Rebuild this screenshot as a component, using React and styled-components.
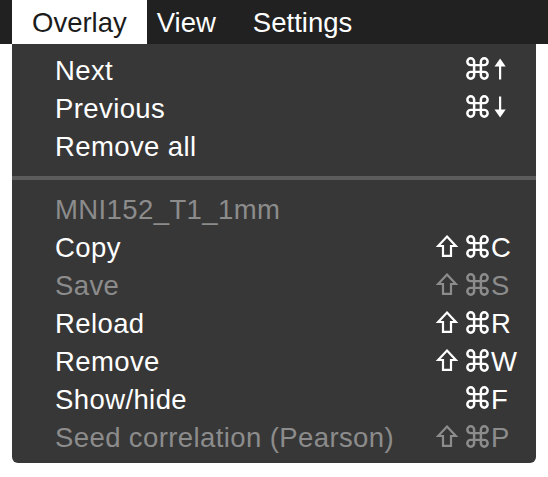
import React from "react";
import styled, { createGlobalStyle } from "styled-components";

const Global = createGlobalStyle`
  html, body { margin: 0; padding: 0; background: #ffffff; }
  body { font-family: "Liberation Sans", Arial, Helvetica, sans-serif; }
`;

const Page = styled.div`
  width: 548px;
  height: 477px;
  background: #ffffff;
  overflow: hidden;
`;

const MenuBar = styled.div`
  display: flex;
  height: 44px;
  padding-left: 12px;
  background: #212121;
`;

const MenuTitle = styled.div`
  height: 44px;
  box-sizing: border-box;
  padding: ${(p) => (p.$active ? "2px 20px 0 20px" : "2px 27px 0 10px")};
  line-height: 42px;
  font-size: 27.5px;
  color: ${(p) => (p.$active ? "#1b1b1b" : "#ffffff")};
  background: ${(p) => (p.$active ? "#ffffff" : "transparent")};
  white-space: nowrap;
`;

const Dropdown = styled.div`
  width: 524px;
  margin-left: 12px;
  box-sizing: border-box;
  padding: 8px 0 6px 0;
  background: #373737;
  border-radius: 0 0 6px 6px;
`;

const Row = styled.div`
  display: flex;
  align-items: baseline;
  height: 38px;
  padding: 0 16px 0 43px;
  font-size: 27.5px;
  line-height: 38px;
  color: ${(p) => (p.$disabled ? "#8c8c8c" : "#ffffff")};
  white-space: nowrap;
`;

const Label = styled.span`
  flex: 1;
  letter-spacing: 0.4px;
`;

const Shortcut = styled.span`
  display: flex;
  align-items: baseline;
`;

const Mods = styled.span`
  display: flex;
  align-items: baseline;
  gap: 9px;
  margin-right: 2px;
`;

const Glyph = styled.svg`
  display: block;
  overflow: visible;
  align-self: center;
  margin-top: -2px;
`;

const Key = styled.span`
  width: 29px;
  display: flex;
  align-items: center;
`;

const Separator = styled.div`
  height: 4px;
  margin: 10px 0 11px 0;
  background: #5c5c5c;
`;

const CommandIcon = () => (
  <Glyph width="23" height="23" viewBox="1.8 1.8 20.4 20.4" fill="none" stroke="currentColor" strokeWidth="2.2" strokeLinecap="round" strokeLinejoin="round">
    <path d="M15 6v12a3 3 0 1 0 3-3H6a3 3 0 1 0 3 3V6a3 3 0 1 0-3 3h12a3 3 0 1 0-3-3" />
  </Glyph>
);

const ShiftIcon = () => (
  <Glyph width="20" height="22" viewBox="0 0 20 22" fill="none" stroke="currentColor" strokeWidth="2.2" strokeLinejoin="miter">
    <path d="M10 1.5 L18.8 11 H14 V20.8 H6 V11 H1.2 Z" />
  </Glyph>
);

const ArrowIcon = ({ down }) => (
  <Glyph width="14" height="22" viewBox="0 0 14 22" fill="currentColor" style={{ marginLeft: 2 }}>
    {down ? (
      <g>
        <rect x="6" y="0.5" width="2.2" height="15" />
        <path d="M1.5 13.5 H12.7 L7.1 21.5 Z" />
      </g>
    ) : (
      <g>
        <rect x="6" y="6.5" width="2.2" height="15" />
        <path d="M1.5 8.5 H12.7 L7.1 0.5 Z" />
      </g>
    )}
  </Glyph>
);

const modIcon = { shift: <ShiftIcon />, cmd: <CommandIcon /> };

const groupA = [
  { label: "Next", mods: ["cmd"], arrow: "up" },
  { label: "Previous", mods: ["cmd"], arrow: "down" },
  { label: "Remove all" },
];

const groupB = [
  { label: "MNI152_T1_1mm", disabled: true },
  { label: "Copy", mods: ["shift", "cmd"], key: "C" },
  { label: "Save", mods: ["shift", "cmd"], key: "S", disabled: true },
  { label: "Reload", mods: ["shift", "cmd"], key: "R" },
  { label: "Remove", mods: ["shift", "cmd"], key: "W" },
  { label: "Show/hide", mods: ["cmd"], key: "F" },
  { label: "Seed correlation (Pearson)", mods: ["shift", "cmd"], key: "P", disabled: true },
];

function Item({ item }) {
  const hasShortcut = item.key || item.arrow;
  return (
    <Row $disabled={item.disabled}>
      <Label>{item.label}</Label>
      {hasShortcut && (
        <Shortcut>
          <Mods>
            {item.mods.map((m) => (
              <React.Fragment key={m}>{modIcon[m]}</React.Fragment>
            ))}
          </Mods>
          <Key>{item.arrow ? <ArrowIcon down={item.arrow === "down"} /> : item.key}</Key>
        </Shortcut>
      )}
    </Row>
  );
}

export default function App() {
  return (
    <Page>
      <Global />
      <MenuBar>
        <MenuTitle $active>Overlay</MenuTitle>
        <MenuTitle>View</MenuTitle>
        <MenuTitle>Settings</MenuTitle>
      </MenuBar>
      <Dropdown>
        {groupA.map((it) => (
          <Item key={it.label} item={it} />
        ))}
        <Separator />
        {groupB.map((it) => (
          <Item key={it.label} item={it} />
        ))}
      </Dropdown>
    </Page>
  );
}
